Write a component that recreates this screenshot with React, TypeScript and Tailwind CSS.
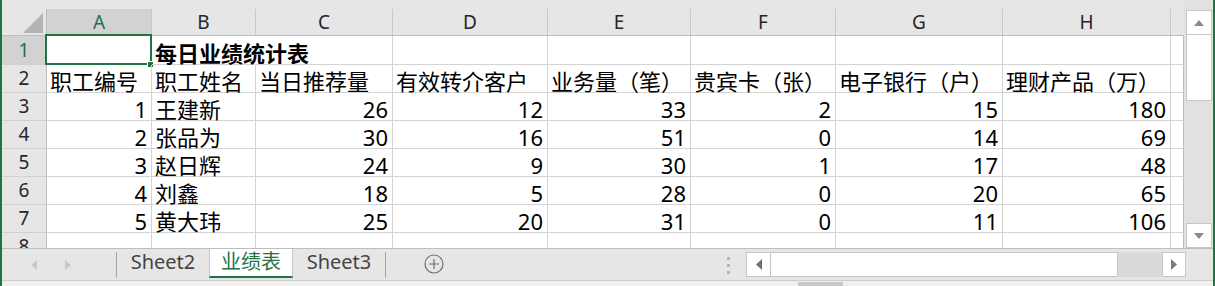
import React from 'react'

const cols = [
  { l: 'A', w: 'w-[105px]' },
  { l: 'B', w: 'w-[104px]' },
  { l: 'C', w: 'w-[137px]' },
  { l: 'D', w: 'w-[155px]' },
  { l: 'E', w: 'w-[143px]' },
  { l: 'F', w: 'w-[145px]' },
  { l: 'G', w: 'w-[167px]' },
  { l: 'H', w: 'w-[168px]' },
]

const heads = ['职工编号', '职工姓名', '当日推荐量', '有效转介客户', '业务量（笔）', '贵宾卡（张）', '电子银行（户）', '理财产品（万）']

const data: (string | number)[][] = [
  [1, '王建新', 26, 12, 33, 2, 15, 180],
  [2, '张品为', 30, 16, 51, 0, 14, 69],
  [3, '赵日辉', 24, 9, 30, 1, 17, 48],
  [4, '刘鑫', 18, 5, 28, 0, 20, 65],
  [5, '黄大玮', 25, 20, 31, 0, 11, 106],
]

const Row = ({ n, h, active, children }: { n: number; h: string; active?: boolean; children: React.ReactNode }) => (
  <div className={`flex shrink-0 ${h}`}>
    <div
      className={`w-[45px] shrink-0 border-r border-b border-r-[#bdbdbd] border-b-[#d0d0d0] flex items-center justify-center text-[19px] ${
        active ? 'bg-[#d2d2d2] text-[#217346]' : 'bg-[#e6e6e6] text-[#262626]'
      }`}
    >
      {n}
    </div>
    {children}
    <div className="w-[13px] shrink-0 border-b border-r border-b-[#d4d4d4] border-r-[#bdbdbd]" />
  </div>
)

const Cell = ({
  w,
  right,
  bold,
  noLine,
  children,
}: {
  w: string
  right?: boolean
  bold?: boolean
  noLine?: boolean
  children?: React.ReactNode
}) => (
  <div
    className={`relative shrink-0 flex items-end whitespace-nowrap border-b border-[#d4d4d4] leading-[22px] text-[22px] text-black ${w} ${
      noLine ? 'border-r border-r-transparent' : 'border-r'
    } ${right ? 'justify-end pr-[4px]' : 'justify-start pl-[3px]'} ${bold ? 'font-bold' : ''}`}
  >
    {children}
  </div>
)

export default function App() {
  return (
    <div className="w-[1215px] h-[286px] overflow-hidden flex flex-col bg-[#e6e6e6] border-l-2 border-r-2 border-[#217346] font-['Noto_Sans','Noto_Sans_CJK_SC',sans-serif] select-none">
      {/* sheet + vertical scrollbar */}
      <div className="flex h-[248px] shrink-0">
        <div className="w-[1182px] shrink-0 flex flex-col overflow-hidden">
          <div className="h-[9px] shrink-0" />
          {/* column headers */}
          <div className="flex h-[27px] shrink-0 border-b border-[#bdbdbd]">
            <div className="w-[45px] shrink-0 border-r border-[#bdbdbd] relative">
              <svg className="absolute left-0 top-0" width="44" height="26" viewBox="0 0 44 26">
                <polygon points="41,4 41,24 21,24" fill="#b4b4b4" />
              </svg>
            </div>
            {cols.map((c, i) => (
              <div
                key={c.l}
                className={`${c.w} shrink-0 border-r border-[#c8c8c8] flex items-center justify-center text-[19px] leading-none ${
                  i === 0 ? 'bg-[#d2d2d2] text-[#217346]' : 'text-[#262626]'
                }`}
              >
                {c.l}
              </div>
            ))}
            <div className="w-[13px] shrink-0" />
          </div>

          <div className="bg-white flex flex-col">
            <Row n={1} h="h-[29px]" active>
              <Cell w={cols[0].w}>
                <div className="absolute -left-[2px] -top-[2px] w-[107px] h-[31px] border-2 border-[#217346]" />
                <div className="absolute -right-[3px] -bottom-[4px] w-[7px] h-[7px] bg-[#217346] border border-white" />
              </Cell>
              <Cell w={cols[1].w} bold noLine>
                每日业绩统计表
              </Cell>
              {cols.slice(2).map((c) => (
                <Cell key={c.l} w={c.w} />
              ))}
            </Row>
            <Row n={2} h="h-[28px]">
              {cols.map((c, i) => (
                <Cell key={c.l} w={c.w}>
                  {heads[i]}
                </Cell>
              ))}
            </Row>
            {data.map((r, ri) => (
              <Row key={ri} n={ri + 3} h="h-[28px]">
                {cols.map((c, i) => (
                  <Cell key={c.l} w={c.w} right={typeof r[i] === 'number'}>
                    {r[i]}
                  </Cell>
                ))}
              </Row>
            ))}
            <Row n={8} h="h-[28px]">
              {cols.map((c) => (
                <Cell key={c.l} w={c.w} />
              ))}
            </Row>
          </div>
        </div>

        {/* vertical scrollbar */}
        <div className="w-[29px] shrink-0 flex flex-col pl-[2px] pt-[10px] bg-[#e1e1e1]">
          <div className="w-[26px] h-[25px] shrink-0 bg-white border border-[#c6c6c6] flex items-center justify-center">
            <svg width="10" height="6" viewBox="0 0 10 6">
              <polygon points="5,0 10,6 0,6" fill="#8a8a8a" />
            </svg>
          </div>
          <div className="w-[26px] h-[66px] shrink-0 bg-white border border-[#c6c6c6] border-t-0" />
          <div className="flex-1" />
          <div className="w-[26px] h-[25px] shrink-0 bg-white border border-[#c6c6c6] flex items-center justify-center">
            <svg width="10" height="6" viewBox="0 0 10 6">
              <polygon points="0,0 10,0 5,6" fill="#8a8a8a" />
            </svg>
          </div>
        </div>
      </div>

      {/* sheet tabs */}
      <div className="flex h-[32px] shrink-0 border-t border-[#bdbdbd] bg-[#e6e6e6]">
        <div className="w-[114px] shrink-0 flex items-center pl-[29px] gap-[28px]">
          <svg width="6" height="10" viewBox="0 0 6 10">
            <polygon points="6,0 6,10 0,5" fill="#c8c8c8" />
          </svg>
          <svg width="6" height="10" viewBox="0 0 6 10">
            <polygon points="0,0 0,10 6,5" fill="#c8c8c8" />
          </svg>
        </div>
        <div className="w-px h-[26px] mt-[3px] shrink-0 bg-[#a6a6a6]" />
        <div className="w-[92px] shrink-0 flex justify-center pt-[3px] text-[20px] leading-[20px] text-[#444444]">Sheet2</div>
        <div className="w-[84px] h-[29px] shrink-0 flex justify-center pt-[3px] bg-white border-x border-[#c6c6c6] border-b-2 border-b-[#217346] text-[20px] leading-[20px] text-[#217346]">
          业绩表
        </div>
        <div className="w-[92px] shrink-0 flex justify-center pt-[3px] text-[20px] leading-[20px] text-[#444444]">Sheet3</div>
        <div className="w-px h-[26px] mt-[3px] shrink-0 bg-[#a6a6a6]" />
        <div className="ml-[38px] flex items-center pb-[1px]">
          <svg width="20" height="20" viewBox="0 0 20 20">
            <circle cx="10" cy="10" r="9" fill="none" stroke="#707070" strokeWidth="1.2" />
            <path d="M10 5v10M5 10h10" stroke="#707070" strokeWidth="1.2" />
          </svg>
        </div>
        <div className="flex-1" />
        <div className="flex flex-col gap-[4px] pt-[8px] mr-[16px]">
          <div className="w-[3px] h-[3px] bg-[#b4b4b4]" />
          <div className="w-[3px] h-[3px] bg-[#b4b4b4]" />
          <div className="w-[3px] h-[3px] bg-[#b4b4b4]" />
        </div>
        {/* horizontal scrollbar */}
        <div className="w-[440px] h-[25px] mt-[3px] shrink-0 flex">
          <div className="w-[25px] shrink-0 bg-white border border-[#c6c6c6] flex items-center justify-center">
            <svg width="6" height="11" viewBox="0 0 6 11">
              <polygon points="6,0 6,11 0,5.5" fill="#6e6e6e" />
            </svg>
          </div>
          <div className="w-[347px] shrink-0 bg-white border border-l-0 border-[#c6c6c6]" />
          <div className="flex-1 bg-[#dadada]" />
          <div className="w-[24px] shrink-0 bg-white border border-[#c6c6c6] flex items-center justify-center">
            <svg width="6" height="11" viewBox="0 0 6 11">
              <polygon points="0,0 0,11 6,5.5" fill="#7a7a7a" />
            </svg>
          </div>
        </div>
        <div className="w-[27px] shrink-0" />
      </div>

      {/* bottom strip */}
      <div className="flex-1 flex border-t border-[#cfcfcf] bg-[#f0f0f0]">
        <div className="ml-[796px] mt-[1px] w-[45px] bg-[#c8c8c8]" />
      </div>
    </div>
  )
}
